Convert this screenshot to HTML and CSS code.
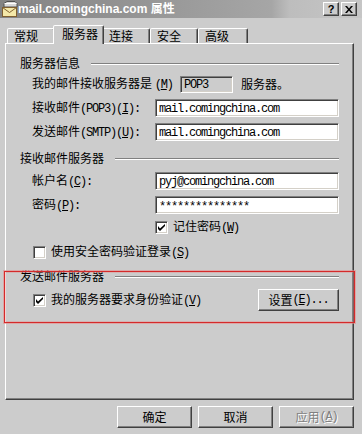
FILE: index.html
```html
<!DOCTYPE html>
<html lang="zh-CN">
<head>
<meta charset="utf-8">
<title>mail.comingchina.com 属性</title>
<link rel="stylesheet" href="styles.css">
</head>
<body>
<div class="titlebar">
  <svg class="ticon" width="16" height="16" viewBox="0 0 16 16">
    <path d="M2 2.5 L5 0.5 H13 L15 2.5 V6 H2 Z" fill="#d8d8d8" stroke="#505050" stroke-width="1"/>
    <path d="M2.5 2.5 H14.5" stroke="#ffffff" stroke-width="1"/>
    <rect x="0.5" y="6.5" width="14" height="9" fill="#f4e8a8" stroke="#806030"/>
    <path d="M0.5 6.5 L7.5 11.5 L14.5 6.5" fill="none" stroke="#806030"/>
  </svg>
  <span class="ttext">mail.comingchina.com 属性</span>
  <div class="tbtns">
    <span class="tbtn help">?</span>
    <span class="tbtn">
      <svg width="8" height="7" viewBox="0 0 8 7"><path d="M0 0h2l2 2.5L6 0h2L5 3.5 8 7H6L4 4.5 2 7H0l3-3.5z" fill="#000"/></svg>
    </span>
  </div>
</div>

<div class="tabs">
  <div class="tab t1">常规</div>
  <div class="tab sel">服务器</div>
  <div class="tab t3">连接</div>
  <div class="tab t4">安全</div>
  <div class="tab t5">高级</div>
</div>

<div class="panel">
  <div class="ghead g1"><span>服务器信息</span><i class="gline"></i></div>
  <div class="row rtype">
    <span class="tlabel">我的邮件接收服务器是 <span class="m">(<u>M</u>)</span></span>
    <span class="robox m">POP3</span>
    <span class="after">服务器。</span>
  </div>
  <div class="row frow">
    <span>接收邮件<span class="m">(POP3)(<u>I</u>):</span></span>
    <span class="input m">mail.comingchina.com</span>
  </div>
  <div class="row frow">
    <span>发送邮件<span class="m">(SMTP)(<u>U</u>):</span></span>
    <span class="input m">mail.comingchina.com</span>
  </div>

  <div class="ghead g2"><span>接收邮件服务器</span><i class="gline"></i></div>
  <div class="row frow r5">
    <span>帐户名<span class="m">(<u>C</u>):</span></span>
    <span class="input m">pyj@comingchina.com</span>
  </div>
  <div class="row frow">
    <span>密码<span class="m">(<u>P</u>):</span></span>
    <span class="input m pw">***************</span>
  </div>
  <div class="row frow rremember">
    <span></span>
    <span class="check"><span class="cbox on"><svg width="7" height="7" viewBox="0 0 7 7"><path d="M0 2v3l2 2 5-5V0L2 4.5z" fill="#000"/></svg></span><span>记住密码<span class="m">(<u>W</u>)</span></span></span>
  </div>
  <div class="row rspa">
    <span class="check ind"><span class="cbox"></span><span>使用安全密码验证登录<span class="m">(<u>S</u>)</span></span></span>
  </div>

  <div class="ghead g3"><span>发送邮件服务器</span><i class="gline"></i></div>
  <div class="row rauth">
    <span class="check ind"><span class="cbox on"><svg width="7" height="7" viewBox="0 0 7 7"><path d="M0 2v3l2 2 5-5V0L2 4.5z" fill="#000"/></svg></span><span>我的服务器要求身份验证<span class="m">(<u>V</u>)</span></span></span>
    <span class="btn bset">设置<span class="m">(<u>E</u>)...</span></span>
  </div>
</div>

<div class="footer">
  <span class="btn">确定</span>
  <span class="btn">取消</span>
  <span class="btn disabled">应用<span class="m">(<u>A</u>)</span></span>
</div>

<div class="highlight"></div>
</body>
</html>
```

FILE: styles.css
```css
* { box-sizing: border-box; }
html, body { margin: 0; padding: 0; }
body {
  position: relative;
  width: 362px;
  height: 434px;
  overflow: hidden;
  background: #cccccc;
  color: #000;
  font-family: "Noto Sans CJK SC", "Liberation Sans", sans-serif;
  font-size: 12px;
  line-height: 12px;
}
u { text-decoration: underline; text-underline-offset: 1px; }
.m {
  font-family: "Liberation Mono", "Noto Sans CJK SC", monospace;
  font-size: 12px;
  letter-spacing: -1.2px;
}

/* title bar */
.titlebar {
  height: 18px;
  display: flex;
  align-items: center;
  padding: 0 5px 0 2px;
  background: linear-gradient(90deg, #838383 0%, #a6a6a6 75%, #bdbdbd 80%, #c6c6c6 100%);
}
.ticon { flex: none; width: 16px; height: 16px; }
.ttext {
  color: #fff;
  font-family: "Liberation Sans", "Noto Sans CJK SC", sans-serif;
  font-weight: bold;
  font-size: 12px;
  line-height: 14px;
}
.tbtns { margin-left: auto; display: flex; gap: 2px; }
.tbtn {
  width: 16px;
  height: 14px;
  display: flex;
  align-items: center;
  justify-content: center;
  background: #cccccc;
  border: 1px solid;
  border-color: #ffffff #404040 #404040 #ffffff;
  box-shadow: inset -1px -1px #808080;
  font-family: "Liberation Sans", sans-serif;
  font-weight: bold;
  font-size: 11px;
  line-height: 11px;
}

/* tabs */
.tabs {
  height: 18px;
  margin-top: 7px;
  padding-left: 7px;
  display: flex;
  align-items: flex-end;
}
.tab {
  height: 15px;
  padding: 1px 0 0 6px;
  border: 1px solid;
  border-bottom: none;
  border-color: #ffffff #404040 transparent #ffffff;
  border-radius: 2px 2px 0 0;
  box-shadow: inset -1px 0 #808080;
  background: #cccccc;
}
.t1 { width: 48px; }
.t3 { width: 48px; }
.t4 { width: 48px; }
.t5 { width: 50px; }
.sel {
  position: relative;
  z-index: 2;
  width: 51px;
  height: 19px;
  margin: 0 -2px -1px -2px;
  padding: 2px 0 0 8px;
}

/* panel */
.panel {
  margin-left: 5px;
  width: 349px;
  height: 357px;
  border: 1px solid;
  border-color: #ffffff #404040 #404040 #ffffff;
  box-shadow: inset -1px -1px #808080;
  padding: 0 14px 0 0;
}
.ghead {
  height: 12px;
  display: flex;
  align-items: center;
  padding-left: 14px;
}
.g1 { margin-top: 13px; }
.g2 { margin-top: 8px; }
.g3 { margin-top: 3px; }
.gline {
  flex: 1;
  height: 2px;
  margin: 2px 0 0 11px;
  border-top: 1px solid #808080;
  border-bottom: 1px solid #ffffff;
}
.row {
  height: 24px;
  display: flex;
  align-items: center;
  padding-left: 26px;
}
.rtype { margin-top: 3px; }
.tlabel { width: 148px; white-space: nowrap; }
.robox {
  width: 53px;
  height: 17px;
  padding: 2px 0 0 3px;
  border: 1px solid;
  border-color: #808080 #ffffff #ffffff #808080;
  box-shadow: inset 1px 1px #404040, inset -1px -1px #d4d0c8;
  line-height: 12px;
}
.after { margin-left: 8px; }
.frow {
  display: grid;
  grid-template-columns: 123px 184px;
  align-items: center;
}
.input {
  height: 18px;
  padding: 3px 0 0 3px;
  background: #ffffff;
  border: 1px solid;
  border-color: #808080 #ffffff #ffffff #808080;
  box-shadow: inset 1px 1px #404040, inset -1px -1px #d4d0c8;
  line-height: 12px;
  white-space: nowrap;
}
.pw { padding-top: 4px; }
.r5 { margin-top: 5px; }
.rremember { height: 20px; }
.rspa { height: 30px; }
.rauth { margin-top: 6px; justify-content: space-between; }
.check { display: flex; align-items: center; gap: 5px; }
.ind { margin-left: 1px; }
.cbox {
  width: 13px;
  height: 13px;
  flex: none;
  display: flex;
  align-items: center;
  justify-content: center;
  background: #ffffff;
  border: 1px solid;
  border-color: #808080 #ffffff #ffffff #808080;
  box-shadow: inset 1px 1px #404040, inset -1px -1px #d4d0c8;
}
.cbox svg { display: block; }

/* buttons */
.btn {
  display: flex;
  align-items: center;
  justify-content: center;
  width: 75px;
  height: 22px;
  background: #cccccc;
  border: 1px solid;
  border-color: #ffffff #404040 #404040 #ffffff;
  box-shadow: inset -1px -1px #808080;
}
.bset { width: 81px; height: 22px; }
.footer {
  margin-top: 6px;
  padding-right: 8px;
  display: flex;
  justify-content: flex-end;
  gap: 6px;
}
.disabled {
  color: #808080;
  text-shadow: 1px 1px 0 #ffffff;
}

/* annotation overlay */
.highlight {
  position: absolute;
  left: 4px;
  top: 271px;
  width: 351px;
  height: 52px;
  border: 1px solid #d42a2a;
  box-shadow: 0 0 0 1px rgba(230, 140, 140, 0.6), inset 0 0 0 1px rgba(230, 140, 140, 0.4);
  pointer-events: none;
}
```
